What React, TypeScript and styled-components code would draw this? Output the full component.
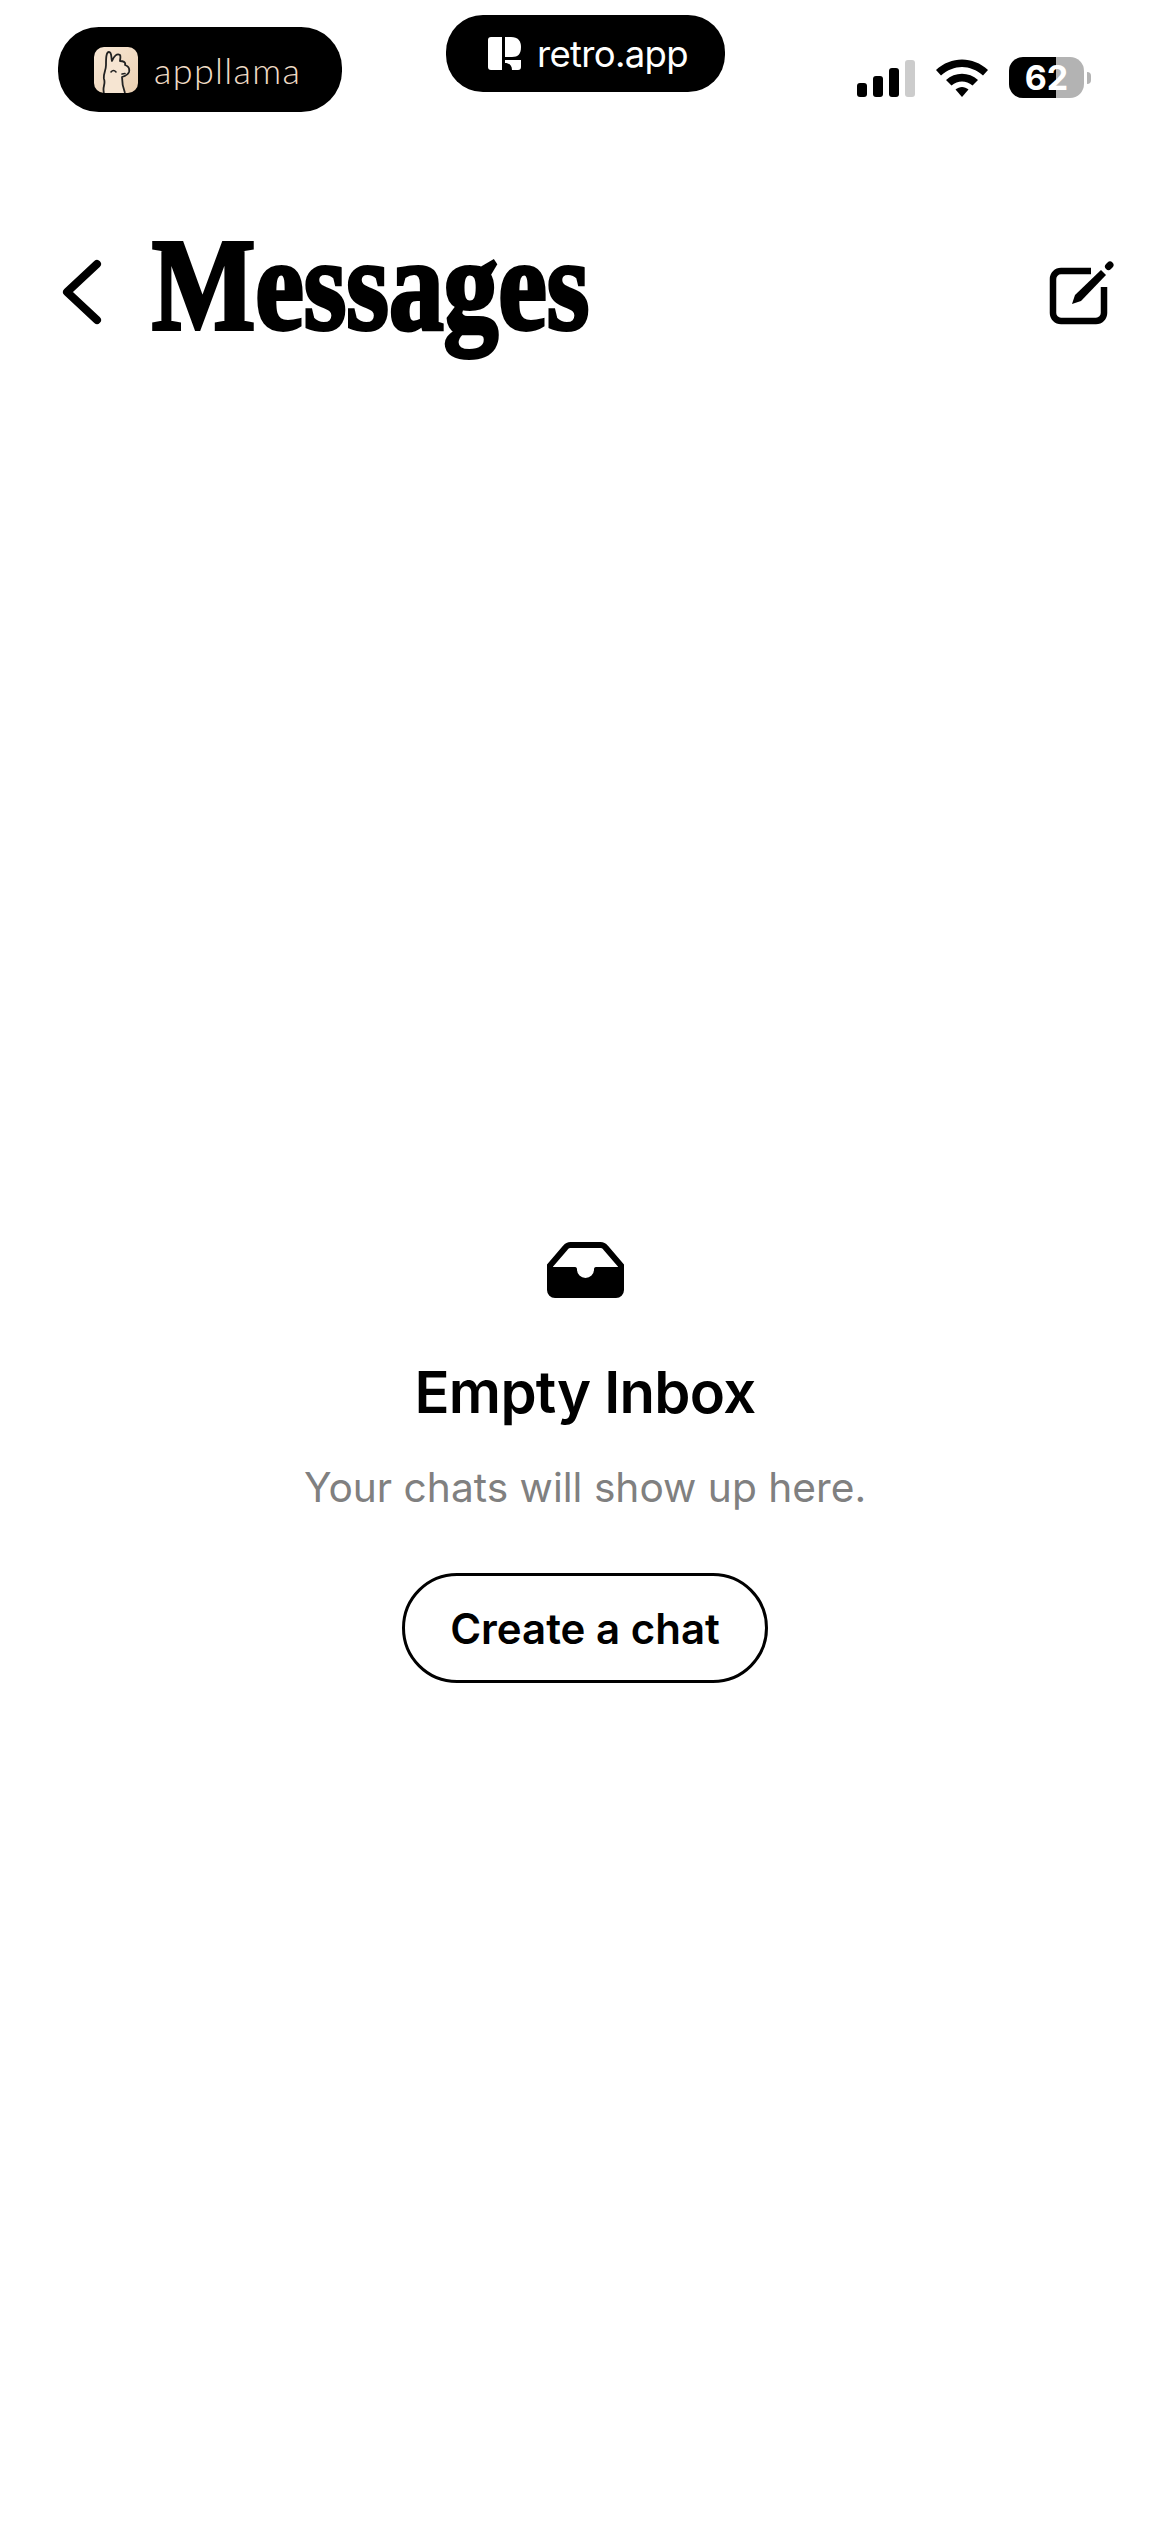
import styled, { createGlobalStyle } from "styled-components";

const GlobalStyle = createGlobalStyle`
  html, body {
    margin: 0;
    padding: 0;
    background: #fff;
  }
  body {
    font-family: Inter, "Liberation Sans", sans-serif;
    color: #000;
  }
`;

const Page = styled.div`
  width: 1170px;
  height: 2532px;
  overflow: hidden;
  background: #fff;
`;

const TopBar = styled.div`
  display: flex;
  align-items: flex-start;
  height: 130px;
  padding: 0 79px 0 58px;
`;

const Pill = styled.div<{ $top: number; $width: number; $height: number; $left: number }>`
  display: flex;
  align-items: center;
  flex-shrink: 0;
  box-sizing: border-box;
  width: ${({ $width }) => $width}px;
  height: ${({ $height }) => $height}px;
  margin-top: ${({ $top }) => $top}px;
  margin-left: ${({ $left }) => $left}px;
  background: #000;
  border-radius: ${({ $height }) => $height * 0.48}px;
`;

const AppllamaPill = styled(Pill)`
  padding-left: 36px;
  gap: 16px;
`;

const RetroPill = styled(Pill)`
  padding-left: 42px;
  gap: 15px;
`;

const AppllamaText = styled.span`
  font-family: Lato, sans-serif;
  font-weight: 300;
  font-size: 36px;
  letter-spacing: 1.3px;
  color: #f0dcc6;
`;

const RetroText = styled.span`
  font-size: 36.5px;
  font-weight: 400;
  letter-spacing: -0.7px;
  color: #fff;
`;

const StatusGroup = styled.div`
  display: flex;
  align-items: center;
  margin-left: auto;
  margin-top: 57px;
  height: 41px;
  gap: 21px;
`;

const SignalBars = styled.div`
  display: flex;
  align-items: flex-end;
  gap: 6px;
  height: 38px;
`;

const SignalBar = styled.span<{ $height: number; $off?: boolean }>`
  width: 10px;
  height: ${({ $height }) => $height}px;
  border-radius: 3px;
  background: ${({ $off }) => ($off ? "#cccccc" : "#000")};
`;

const BatteryWrap = styled.div`
  display: flex;
  align-items: center;
  gap: 3px;
`;

const BatteryBody = styled.div<{ $level: number }>`
  display: flex;
  align-items: center;
  justify-content: center;
  width: 75px;
  height: 41px;
  border-radius: 14px;
  background: linear-gradient(
    90deg,
    #000 ${({ $level }) => $level}%,
    #b3b3b3 ${({ $level }) => $level}%
  );
  color: #fff;
  font-size: 34px;
  font-weight: 700;
  line-height: 1;
`;

const BatteryNub = styled.span`
  width: 4px;
  height: 12px;
  border-radius: 0 6px 6px 0;
  background: #b3b3b3;
`;

const Header = styled.header`
  display: flex;
  align-items: center;
  height: 106px;
  margin-top: 109px;
  padding: 0 55px 0 62px;
`;

const Title = styled.h1`
  flex: 1;
  margin: 0 0 14px 50px;
  font-family: "Liberation Serif", serif;
  font-size: 131px;
  font-weight: 700;
  line-height: 106px;
  white-space: nowrap;
  -webkit-text-stroke: 4px #000;
  transform: scaleX(0.835);
  transform-origin: left center;
`;

const EmptyState = styled.main`
  display: flex;
  flex-direction: column;
  align-items: center;
  padding-top: 896px;
`;

const EmptyTitle = styled.h2`
  margin: 58px 0 0;
  font-size: 58px;
  font-weight: 600;
  line-height: 72px;
  letter-spacing: -0.7px;
`;

const EmptyText = styled.p`
  margin: 35px 0 0;
  font-size: 40.7px;
  font-weight: 400;
  line-height: 50px;
  color: #808080;
`;

const CreateButton = styled.button`
  box-sizing: border-box;
  width: 366px;
  height: 110px;
  margin-top: 60px;
  padding: 0;
  background: #fff;
  border: 3px solid #000;
  border-radius: 55px;
  font-family: inherit;
  font-size: 42px;
  font-weight: 600;
  color: #000;
`;

const LlamaIcon = () => (
  <svg width="44" height="46" viewBox="0 0 44 46">
    <defs>
      <linearGradient id="llamaBg" x1="0" y1="0" x2="1" y2="1">
        <stop offset="0" stopColor="#f8e8d6" />
        <stop offset="1" stopColor="#ebd0b2" />
      </linearGradient>
    </defs>
    <rect width="44" height="46" rx="10" fill="url(#llamaBg)" />
    <path
      d="M10 46 C8 40 12 37 10 32 C9 27 12 24 12 18 C12 12 12 5 15 5 C18 5 17 11 18 14 C20 9 23 6 26 8 C27 10 26 12 26 14 C29 14 32 15 31 18 C34 19 36 21 35 25 C34 28 31 29 28 30 C28 36 29 41 31 46"
      fill="#f6e5d2"
      stroke="#222"
      strokeWidth="1.8"
      strokeLinejoin="round"
    />
    <path d="M17 25 Q19.5 22 22 25 M28 27 L31 26.5" fill="none" stroke="#222" strokeWidth="1.6" strokeLinecap="round" />
  </svg>
);

const RetroLogo = () => (
  <svg width="34" height="33" viewBox="0 0 34 33">
    <path d="M3 0 H14 V33 H3 Q0 33 0 30 V3 Q0 0 3 0 Z" fill="#fff" />
    <path d="M17 0 H23 C30 0 33 4 33 10 C33 17 30 20 24 20 H17 Z" fill="#fff" />
    <path d="M17 23 H33 V30 Q33 33 30 33 H24 C24 28 21 26 17 26 Z" fill="#fff" />
  </svg>
);

const WifiIcon = () => (
  <svg width="52" height="38" viewBox="0 0 52 38">
    <path d="M0 11 C15 -3 37 -3 52 11 L47 16.5 C34 5 18 5 5 16.5 Z" fill="#000" />
    <path d="M10 21 C19 12.5 33 12.5 42 21 L36.5 26.5 C30 21 22 21 15.5 26.5 Z" fill="#000" />
    <path d="M19.5 30.5 C23.5 27 28.5 27 32.5 30.5 L26 38 Z" fill="#000" />
  </svg>
);

const BackIcon = () => (
  <svg width="40" height="66" viewBox="0 0 40 66">
    <path d="M35 5 L5 33 L35 61" fill="none" stroke="#000" strokeWidth="8" strokeLinecap="round" strokeLinejoin="round" />
  </svg>
);

const ComposeIcon = () => (
  <svg width="66" height="66" viewBox="0 0 66 66">
    <path d="M42 12 H12 a8 8 0 0 0 -8 8 V54 a8 8 0 0 0 8 8 H47 a8 8 0 0 0 8 -8 V28" fill="none" stroke="#000" strokeWidth="6.5" strokeLinecap="butt" />
    <path d="M23 45 L26 36 L52 11 L57 16 L32 42 Z" fill="#000" />
    <path d="M59.5 7.5 L61 6" stroke="#000" strokeWidth="7" strokeLinecap="round" />
  </svg>
);

const InboxIcon = () => (
  <svg width="79" height="57" viewBox="16 11 79 57">
    <path d="M20 40 V35.5 L35.5 17.5 Q37.5 15 40.5 15 H70.5 Q73.5 15 75.5 17.5 L91 35.5 V40" fill="none" stroke="#000" strokeWidth="6" />
    <path d="M17 37 H45 C46.5 37 47 38 47 39.5 A8.5 8.5 0 0 0 64 39.5 C64 38 64.5 37 66 37 H94 V60 A8 8 0 0 1 86 68 H25 A8 8 0 0 1 17 60 Z" fill="#000" />
  </svg>
);

export default function App() {
  return (
    <Page>
      <GlobalStyle />
      <TopBar>
        <AppllamaPill $top={27} $left={0} $width={284} $height={85}>
          <LlamaIcon />
          <AppllamaText>appllama</AppllamaText>
        </AppllamaPill>
        <RetroPill $top={15} $left={104} $width={279} $height={77}>
          <RetroLogo />
          <RetroText>retro.app</RetroText>
        </RetroPill>
        <StatusGroup>
          <SignalBars>
            <SignalBar $height={14} />
            <SignalBar $height={21} />
            <SignalBar $height={29} />
            <SignalBar $height={37} $off />
          </SignalBars>
          <WifiIcon />
          <BatteryWrap>
            <BatteryBody $level={63}>62</BatteryBody>
            <BatteryNub />
          </BatteryWrap>
        </StatusGroup>
      </TopBar>
      <Header>
        <BackIcon />
        <Title>Messages</Title>
        <ComposeIcon />
      </Header>
      <EmptyState>
        <InboxIcon />
        <EmptyTitle>Empty Inbox</EmptyTitle>
        <EmptyText>Your chats will show up here.</EmptyText>
        <CreateButton>Create a chat</CreateButton>
      </EmptyState>
    </Page>
  );
}
